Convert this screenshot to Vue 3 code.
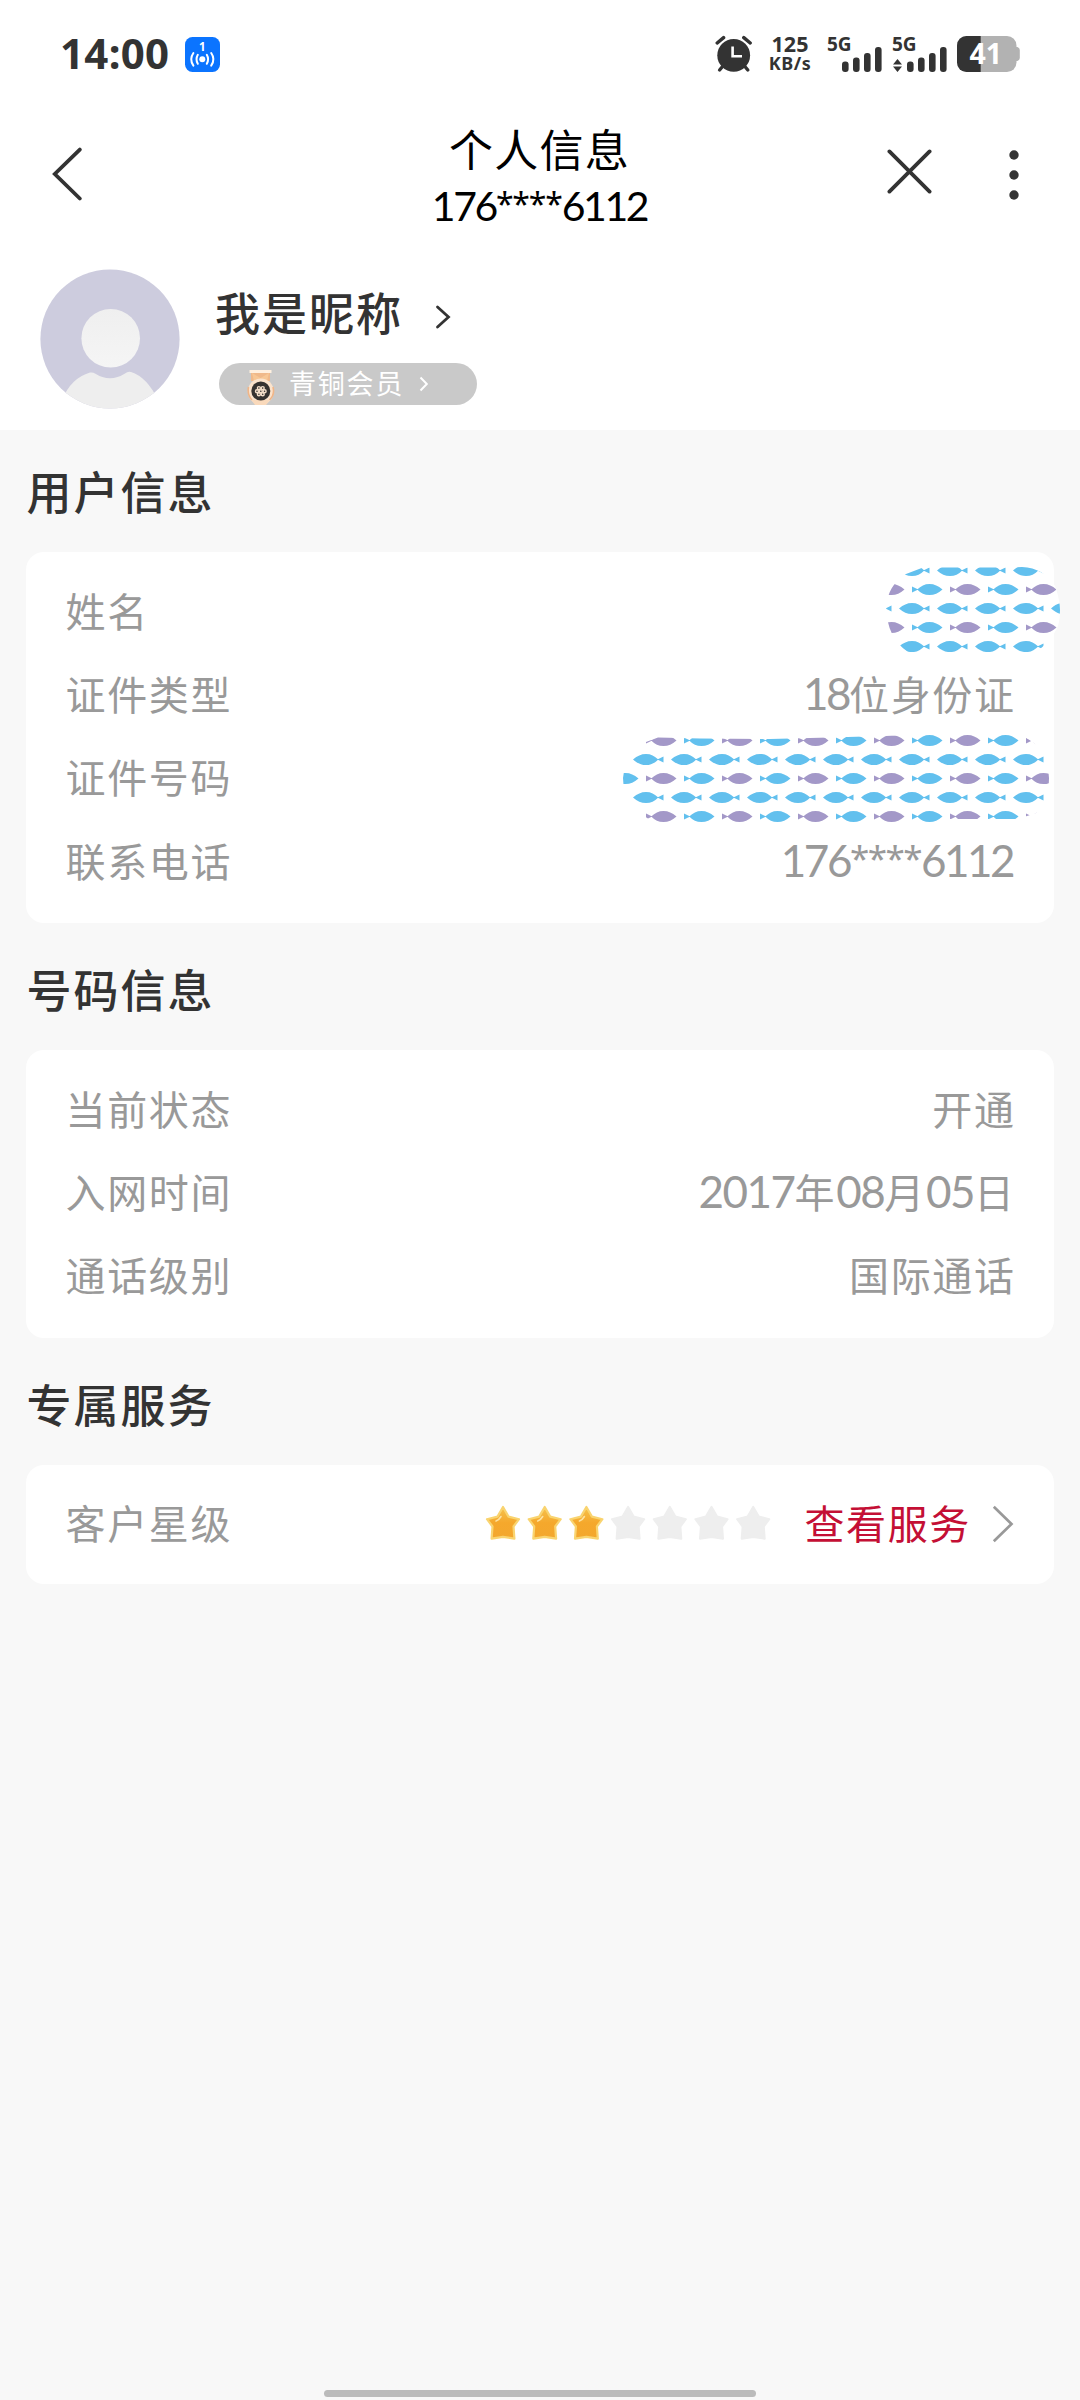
<script setup>
const FISH_X = 38
const FISH_Y = 19

// Builds staggered rows of fish: even rows swim left, odd rows swim right.
function school(x, y, width, height) {
  const list = []
  for (let row = 0; row < 14; row++) {
    const cy = 570.5 + row * FISH_Y
    if (cy < y - 8 || cy > y + height + 8) continue
    const right = row % 2 === 1
    const start = right ? 608 : 633
    for (let col = 0; col < 13; col++) {
      const fx = start + col * FISH_X
      if (fx > x + width || fx + 32 < x) continue
      const purple = right && col % 2 === 1
      list.push({
        key: row + '-' + col,
        transform: right ? `translate(${fx + 30.5} ${cy}) scale(-1 1)` : `translate(${fx} ${cy})`,
        fill: purple ? '#a398c8' : '#62c0ee'
      })
    }
  }
  return list
}

const nameMask = {
  box: '880 560 184 96',
  width: 184,
  height: 96,
  cls: 'mask-name',
  id: 'mask-name',
  path: 'M906 574L923 567.5H1000L1022 567Q1044 568 1055 586Q1060 600 1060 610Q1060 624 1056 630Q1050 642 1036 652H908Q887 638 886 607Q888 585 906 574Z',
  fish: school(880, 560, 184, 96)
}
const idMask = {
  box: '618 730 436 96',
  width: 436,
  height: 96,
  cls: 'mask-id',
  id: 'mask-id',
  path: 'M646 743L658 738.5L700 739.5L770 740L830 738.5L900 736.5L912 733H1010Q1030 738 1040 750Q1049 765 1049 779Q1049 800 1036 814L1018 820H950L935 824H656Q623 808 623 779Q625 755 646 743Z',
  fish: school(618, 730, 436, 96)
}

const sections = [
  {
    title: '用户信息',
    rows: [
      { label: '姓名', mask: nameMask },
      { label: '证件类型', value: '18位身份证' },
      { label: '证件号码', mask: idMask },
      { label: '联系电话', value: '176****6112' }
    ]
  },
  {
    title: '号码信息',
    rows: [
      { label: '当前状态', value: '开通' },
      { label: '入网时间', value: '2017年08月05日' },
      { label: '通话级别', value: '国际通话' }
    ]
  }
]

// Splits a value into digits, asterisks and Chinese text, which are spaced differently.
function runs(text) {
  return (text.match(/\d+|\*+|[^\d*]+/g) || []).map(t => ({
    t,
    cls: /\d/.test(t) ? (text.includes('年') ? 'num' : 'num tight') : t[0] === '*' ? 'ast' : ''
  }))
}

const bars = [
  { x: 0, h: 10.5 },
  { x: 11, h: 14.5 },
  { x: 22, h: 19 },
  { x: 33, h: 25 }
]
</script>

<template>
  <div class="screen">
    <div class="top">
      <div class="status">
        <span class="clock">14:00</span>
        <svg class="hotspot" width="35" height="35" viewBox="0 0 35 35">
          <rect width="35" height="35" rx="7.5" fill="#0b74ff" />
          <text x="17.3" y="14" text-anchor="middle" font-size="11.5" font-weight="700" fill="#fff">1</text>
          <circle cx="17.3" cy="22.3" r="3" fill="#fff" />
          <g fill="none" stroke="#fff" stroke-width="2" stroke-linecap="round">
            <path d="M12.8 17.8q-2.6 4.5 0 9M21.8 17.8q2.6 4.5 0 9" />
            <path d="M8.4 16q-4.4 6.3 0 12.6M26.2 16q4.4 6.3 0 12.6" />
          </g>
        </svg>
        <div class="indicators">
          <svg class="alarm" width="38" height="38" viewBox="0 0 38 38">
            <circle cx="18.7" cy="20.3" r="16.4" fill="#333" />
            <path d="M2.2 8L8.6 2.6M35.2 8L28.8 2.6" stroke="#333" stroke-width="3.4" stroke-linecap="round" />
            <path d="M7.5 31.5L4.6 35M29.9 31.5L32.8 35" stroke="#333" stroke-width="3.4" stroke-linecap="round" />
            <path d="M17.6 11.5V21.3H27" fill="none" stroke="#fff" stroke-width="2.6" />
          </svg>
          <div class="rate"><b>125</b><i>KB/s</i></div>
          <div class="cell">
            <span>5G</span>
            <svg width="40" height="25" viewBox="0 0 40 25">
              <rect v-for="b in bars" :key="b.x" :x="b.x" :y="25 - b.h" width="6.6" :height="b.h" rx="3" fill="#333" />
            </svg>
          </div>
          <div class="cell second">
            <span>5G</span>
            <svg class="arrows" width="9" height="13" viewBox="0 0 9 13">
              <path d="M4.5 0L9 5.6H0ZM4.5 13L9 7.4H0Z" fill="#333" />
            </svg>
            <svg width="40" height="25" viewBox="0 0 40 25">
              <rect v-for="b in bars" :key="b.x" :x="b.x" :y="25 - b.h" width="6.6" :height="b.h" rx="3" fill="#333" />
            </svg>
          </div>
          <svg class="battery" width="63" height="36" viewBox="0 0 63 36">
            <clipPath id="cell-body"><rect width="59.5" height="36" rx="9.5" /></clipPath>
            <path d="M58 11h2.5q2.3 1 2.3 3v8q0 2-2.3 3H58Z" fill="#b2b2b2" />
            <g clip-path="url(#cell-body)">
              <rect width="60" height="36" fill="#b2b2b2" />
              <rect width="23.7" height="36" fill="#333" />
            </g>
            <text x="28.8" y="28.2" text-anchor="middle" font-size="28.5" font-weight="700" fill="#fff">41</text>
          </svg>
        </div>
      </div>

      <div class="nav">
        <svg class="back" width="30" height="54" viewBox="0 0 30 54">
          <path d="M27.8 2.6L2.8 27L27.8 51.5" fill="none" stroke="#333" stroke-width="3.8" stroke-linecap="round" />
        </svg>
        <div class="heading">
          <div class="title">个人信息</div>
          <div class="sub"><span v-for="(p, i) in runs('176****6112')" :key="i" :class="p.cls">{{ p.t }}</span></div>
        </div>
        <div class="actions">
          <svg width="45" height="45" viewBox="0 0 45 45">
            <path d="M2.4 2.4L42.6 42.6M42.6 2.4L2.4 42.6" stroke="#333" stroke-width="3.8" stroke-linecap="round" />
          </svg>
          <svg class="more" width="10" height="50" viewBox="0 0 10 50">
            <g fill="#333"><circle cx="5" cy="5" r="4.7" /><circle cx="5" cy="25" r="4.7" /><circle cx="5" cy="45" r="4.7" /></g>
          </svg>
        </div>
      </div>

      <div class="profile">
        <svg class="avatar" width="140" height="140" viewBox="0 0 140 140">
          <clipPath id="avatar-disc"><circle cx="70" cy="70" r="69.6" /></clipPath>
          <linearGradient id="head-tone" x1="0" y1="0" x2="0" y2="1">
            <stop offset="0" stop-color="#efefef" /><stop offset="1" stop-color="#f5f5f5" />
          </linearGradient>
          <g clip-path="url(#avatar-disc)">
            <rect width="140" height="140" fill="#cdccde" />
            <circle cx="70.7" cy="69.2" r="29.3" fill="url(#head-tone)" />
            <path d="M22 131Q31 109 50 103.5Q53 103 55 104.5Q70 114 85 104.5Q88 102 91 103Q107 108 118 131V140H22Z" fill="#eee" />
          </g>
        </svg>
        <div class="who">
          <div class="nick">
            <span>我是昵称</span>
            <svg width="16" height="24" viewBox="0 0 16 24">
              <path d="M2.5 2L13.5 12L2.5 22" fill="none" stroke="#333" stroke-width="2.8" stroke-linecap="round" />
            </svg>
          </div>
          <div class="pill">
            <svg class="medal" width="28" height="36" viewBox="0 0 28 36">
              <path d="M4 4H23V12H4Z" fill="#f0b98a" />
              <path d="M2.5 1H24.5V4H2.5Z" fill="#fff0df" />
              <path d="M5 4L13.5 9L22 4L20 12H7Z" fill="#f7c795" />
              <circle cx="13.8" cy="22.5" r="13" fill="#fbe3cc" />
              <path d="M1.5 18Q0 26 5 31M26 18Q28 26 22.5 31" fill="none" stroke="#efb588" stroke-width="1.6" />
              <path d="M4.5 31H23L19 36H8Z" fill="#f9d9bb" />
              <circle cx="13.8" cy="22" r="9.5" fill="#363331" />
              <g fill="none" stroke="#f4dfca" stroke-width="1.4">
                <circle cx="11.9" cy="19.1" r="1.5" /><circle cx="15.7" cy="19.1" r="1.5" />
                <circle cx="10" cy="22.2" r="1.5" /><circle cx="13.8" cy="22.2" r="1.5" /><circle cx="17.6" cy="22.2" r="1.5" />
                <circle cx="11.9" cy="25.3" r="1.5" /><circle cx="15.7" cy="25.3" r="1.5" />
              </g>
            </svg>
            <span>青铜会员</span>
            <svg width="10" height="16" viewBox="0 0 10 16">
              <path d="M1.5 1.5L7.8 8L1.5 14.5" fill="none" stroke="#fff" stroke-width="2" />
            </svg>
          </div>
        </div>
      </div>
    </div>

    <template v-for="s in sections" :key="s.title">
      <h2>{{ s.title }}</h2>
      <div class="card">
        <div v-for="r in s.rows" :key="r.label" class="row">
          <span class="label">{{ r.label }}</span>
          <svg v-if="r.mask" :class="['mask', r.mask.cls]" :width="r.mask.width" :height="r.mask.height" :viewBox="r.mask.box">
            <clipPath :id="r.mask.id"><path :d="r.mask.path" /></clipPath>
            <path :d="r.mask.path" fill="#fff" />
            <g :clip-path="`url(#${r.mask.id})`">
              <g v-for="f in r.mask.fish" :key="f.key" :transform="f.transform" :fill="f.fill">
                <path d="M0 0C4.5 -3.8 8 -5.6 13 -5.6S21.500 -3.600 25.300 0C21.500 3.600 18 5.600 13 5.600S4.500 3.800 0 0ZM24.300 0L30.500 -3V3Z" />
              </g>
            </g>
          </svg>
          <span v-else class="value"><span v-for="(p, i) in runs(r.value)" :key="i" :class="p.cls">{{ p.t }}</span></span>
        </div>
      </div>
    </template>

    <h2>专属服务</h2>
    <div class="card single">
      <div class="row">
        <span class="label">客户星级</span>
        <div class="service">
          <svg class="stars" width="287" height="36" viewBox="0 0 287 36">
            <linearGradient id="gold" x1="0" y1="0" x2="0" y2="1">
              <stop offset="0" stop-color="#f5c24d" /><stop offset=".5" stop-color="#f5a82c" /><stop offset="1" stop-color="#f3a72e" />
            </linearGradient>
            <g v-for="n in 7" :key="n" :transform="`translate(${(n - 1) * 41.7} 0)`">
              <path
                d="M18 2L23.5 11.6L34 14.2L28.5 21.5L29.4 33.6L18 31.8L6.6 33.6L7.5 21.5L2 14.2L12.5 11.6Z"
                :fill="n < 4 ? 'url(#gold)' : '#eee'"
                :stroke="n < 4 ? '#f9d470' : '#eee'"
                stroke-width="2.2"
                stroke-linejoin="round"
              />
              <path v-if="n < 4" d="M11 16Q14 15 16 11.5" fill="none" stroke="#fde2a0" stroke-width="1.6" stroke-linecap="round" />
            </g>
          </svg>
          <span class="link">查看服务</span>
          <svg class="go" width="22" height="38" viewBox="0 0 22 38">
            <path d="M1.8 1.8L19.5 19L1.8 36.2" fill="none" stroke="#999" stroke-width="2.7" />
          </svg>
        </div>
      </div>
    </div>

    <div class="home"></div>
  </div>
</template>

<style>
body {
  background: #f8f8f8;
}
</style>

<style scoped>
.screen {
  width: 1080px;
  height: 2400px;
  display: flex;
  flex-direction: column;
  background: #f8f8f8;
  color: #333;
  font-family: "Noto Sans CJK SC", sans-serif;
  overflow: hidden;
}
svg {
  display: block;
  flex: none;
}
svg text {
  font-family: "Noto Sans", sans-serif;
}
.top {
  height: 430px;
  flex: none;
  background: #fff;
}
.status {
  height: 108px;
  display: flex;
  align-items: center;
  padding: 0 60px;
  font-family: "Noto Sans", sans-serif;
}
.clock {
  width: 125px;
  margin-top: -3px;
  font-size: 42px;
  font-weight: 700;
  letter-spacing: 0.3px;
}
.indicators {
  margin-left: auto;
  display: flex;
  align-items: center;
  height: 36px;
}
.rate {
  width: 46px;
  margin: -1px 1px 0 14px;
  text-align: center;
}
.rate b {
  display: block;
  font-size: 21.5px;
  line-height: 19px;
}
.rate i {
  display: block;
  font-style: normal;
  font-weight: 700;
  font-size: 18px;
  line-height: 20px;
  letter-spacing: 0.5px;
}
.battery {
  margin-left: 10px;
  overflow: visible;
}
.cell {
  position: relative;
  height: 36px;
  width: 54px;
  margin-left: 14px;
  display: flex;
  align-items: flex-end;
  justify-content: flex-end;
}
.cell.second {
  margin-left: 11px;
}
.cell span {
  position: absolute;
  left: -1px;
  top: -2.5px;
  font-size: 19px;
  font-weight: 700;
  line-height: 20px;
}
.arrows {
  margin-right: 5px;
}
.nav {
  height: 142px;
  display: flex;
  justify-content: space-between;
  padding: 0 61px 0 52px;
}
.back {
  margin-top: 39px;
}
.heading {
  margin-left: 110px;
  width: 228px;
  text-align: center;
  color: #000;
}
.title {
  margin-top: 15px;
  font-size: 44px;
  line-height: 50px;
  letter-spacing: 1.2px;
}
.sub {
  font-size: 41px;
  line-height: 50px;
  margin-top: 5px;
  white-space: nowrap;
}
.sub .num {
  font-family: Lato, sans-serif;
  letter-spacing: -2.4px;
}
.ast {
  font-family: "Noto Sans", sans-serif;
  line-height: 0;
}
.sub .ast {
  font-size: 32px;
  letter-spacing: -1.2px;
  vertical-align: 5px;
}
.actions {
  display: flex;
}
.actions svg:first-child {
  margin-top: 40.5px;
}
.more {
  margin: 41.5px 0 0 77px;
}
.profile {
  display: flex;
  padding: 18.5px 0 0 40px;
}
.who {
  margin-left: 35px;
}
.nick {
  display: flex;
  align-items: center;
  height: 66px;
  margin-top: 9.5px;
  font-size: 45px;
  font-weight: 500;
  letter-spacing: 2px;
}
.nick svg {
  margin: 12px 0 0 32px;
}
.pill {
  width: 258px;
  height: 42px;
  margin: 19px 0 0 4px;
  border-radius: 21px;
  background: #c9c9c9;
  color: #fff;
  display: flex;
  align-items: center;
  font-size: 27px;
  line-height: 42px;
  letter-spacing: 1.8px;
}
.medal {
  margin: 6px 14px 0 28px;
}
.pill span {
  margin: -2px 15px 0 0;
}
h2 {
  margin: 0;
  flex: none;
  height: 122px;
  padding: 0 0 0 26.5px;
  font-size: 45px;
  font-weight: 500;
  letter-spacing: 2px;
  line-height: 122px;
}
.card {
  flex: none;
  margin: 0 26px 5px;
  padding: 16px 40px 21.800px;
  border-radius: 18px;
  background: #fff;
  color: #999;
  font-size: 40px;
}
.card.single {
  padding-bottom: 20px;
}
.row {
  position: relative;
  height: 83.3px;
  display: flex;
  align-items: center;
  justify-content: space-between;
  letter-spacing: 1.65px;
}
.label {
  margin-left: -0.5px;
}
.value {
  margin-right: -1.65px;
}
.value .num {
  font-family: Lato, sans-serif;
  font-size: 44px;
  letter-spacing: -1.5px;
}
.value .tight {
  letter-spacing: -2.5px;
}
.value .num:last-child {
  margin-right: 2.5px;
}
.value .ast {
  font-size: 35px;
  letter-spacing: -1.5px;
  vertical-align: 6px;
}
.mask {
  position: absolute;
  top: -8.500px;
}
.mask-name {
  right: -50px;
}
.mask-id {
  right: -40px;
  top: -5.200px;
}
.service {
  display: flex;
  align-items: center;
}
.stars {
  margin: 2px 32px 0 0;
}
.link {
  color: #c40f35;
  margin-right: 21px;
}
.go {
  margin-top: 3px;
}
.home {
  width: 432px;
  height: 7px;
  margin: auto auto 3px;
  border-radius: 4px;
  background: #bbb;
}
</style>
